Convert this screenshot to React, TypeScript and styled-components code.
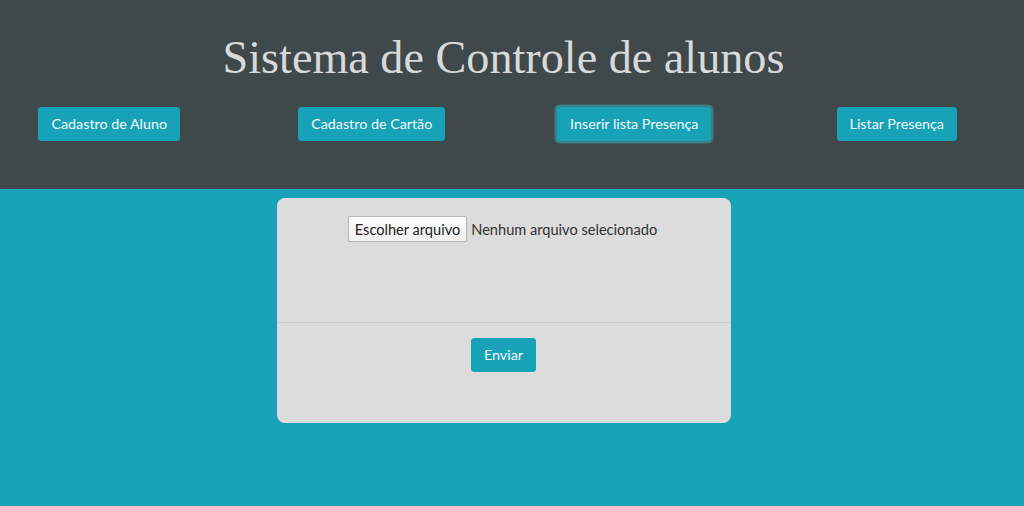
import React from "react";
import styled, { createGlobalStyle } from "styled-components";

const Global = createGlobalStyle`
  html, body { margin: 0; padding: 0; }
  body {
    background: #17a2b8;
    font-family: "Lato", "Noto Sans", sans-serif;
    min-height: 506px;
    overflow: hidden;
  }
`;

const Header = styled.header`
  background: #3f484a;
  height: 189px;
  box-sizing: border-box;
  padding-top: 30px;
  overflow: hidden;
`;

const Inner = styled.div`
  width: 1007px;
`;

const Title = styled.h1`
  margin: 0;
  font-family: "Liberation Serif", "Times New Roman", serif;
  font-weight: 400;
  font-size: 46.2px;
  line-height: 55px;
  color: #d9d9d9;
  text-align: center;
`;

const Nav = styled.nav`
  display: grid;
  grid-template-columns: repeat(4, 262.5px);
  justify-items: center;
  margin-left: -22px;
  margin-top: 22px;
`;

const Button = styled.button<{ $focused?: boolean }>`
  background: #17a2b8;
  color: #f4f9fa;
  border: 1px solid #17a2b8;
  border-radius: 3px;
  font-family: "Lato", "Noto Sans", sans-serif;
  font-size: 14.3px;
  line-height: 20px;
  padding: 6px 12px;
  height: 34px;
  cursor: pointer;
  white-space: nowrap;
  box-shadow: ${(p) => (p.$focused ? "0 0 0 2.5px rgba(58,176,195,0.5)" : "none")};
`;

const Main = styled.main`
  width: 1007px;
  display: flex;
  justify-content: center;
  padding-top: 9px;
`;

const Card = styled.section`
  width: 454px;
  height: 225px;
  background: #dcdcdc;
  border-radius: 8px;
  display: flex;
  flex-direction: column;
`;

const Top = styled.div`
  height: 125px;
  box-sizing: border-box;
  padding-top: 18px;
  display: flex;
  justify-content: center;
  align-items: flex-start;
  border-bottom: 1px solid #cdcdcd;
`;

const FileRow = styled.label`
  display: flex;
  align-items: center;
  gap: 4px;
  font-family: "Lato", "Noto Sans", sans-serif;
  font-size: 14.6px;
  color: #333;
  margin-right: 2px;
`;

const FileButton = styled.span`
  display: inline-flex;
  align-items: center;
  height: 26px;
  box-sizing: border-box;
  padding: 0 6px;
  background: linear-gradient(#fdfdfd, #f0f0f0);
  border: 1px solid #b5b5b5;
  border-radius: 2px;
  color: #222;
`;

const Bottom = styled.div`
  display: flex;
  justify-content: center;
  padding-top: 15px;
`;

export default function App() {
  return (
    <>
      <Global />
      <Header>
        <Inner>
          <Title>Sistema de Controle de alunos</Title>
          <Nav>
            <Button>Cadastro de Aluno</Button>
            <Button>Cadastro de Cartão</Button>
            <Button $focused>Inserir lista Presença</Button>
            <Button>Listar Presença</Button>
          </Nav>
        </Inner>
      </Header>
      <Main>
        <Card>
          <Top>
            <FileRow>
              <FileButton>Escolher arquivo</FileButton>
              <span>Nenhum arquivo selecionado</span>
            </FileRow>
          </Top>
          <Bottom>
            <Button>Enviar</Button>
          </Bottom>
        </Card>
      </Main>
    </>
  );
}
